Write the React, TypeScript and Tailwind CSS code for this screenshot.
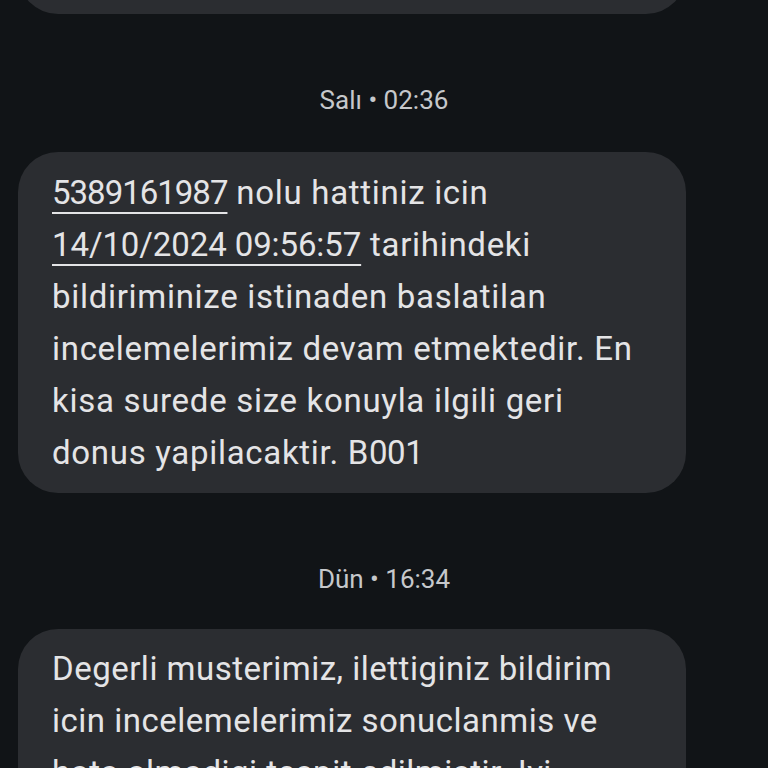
import React from "react";

const font = { fontFamily: "Roboto, 'Noto Sans', sans-serif" };

export default function App() {
  return (
    <div className="h-[768px] w-[768px] overflow-hidden bg-[#111417] text-[#e4e4e6]" style={font}>
      <div className="flex flex-col">
        <div className="ml-[18px] mr-[82px] -mt-[66px] h-[80px] rounded-[40px] bg-[#2b2d31]" />
        <div className="mt-[72px] flex h-[28px] items-center justify-center text-[26px] text-[#c6c8cb]">
          Salı • 02:36
        </div>
        <div className="ml-[18px] mr-[82px] mt-[38px] rounded-[40px] bg-[#2b2d31] pl-[34px] pr-[20px] pt-[15px] pb-[14px] text-[33px] leading-[52px] tracking-[0.7px] whitespace-nowrap">
          <span className="underline decoration-2 underline-offset-[8px] tracking-[-1px]">5389161987</span> nolu hattiniz icin
          <br />
          <span className="underline decoration-2 underline-offset-[8px] tracking-[-0.1px]">14/10/2024 09:56:57</span> tarihindeki
          <br />
          bildiriminize istinaden baslatilan
          <br />
          incelemelerimiz devam etmektedir. En
          <br />
          kisa surede size konuyla ilgili geri
          <br />
          donus yapilacaktir. B<span className="tracking-[-0.5px]">001</span>
        </div>
        <div className="mt-[72px] flex h-[28px] items-center justify-center text-[26px] text-[#c6c8cb]">
          Dün • 16:34
        </div>
        <div className="ml-[18px] mr-[82px] mt-[36px] rounded-[40px] bg-[#2b2d31] pl-[34px] pr-[20px] pt-[14px] pb-[16px] text-[33px] leading-[52px] tracking-[0.5px] whitespace-nowrap">
          Degerli musterimiz, ilettiginiz bildirim
          <br />
          icin incelemelerimiz sonuclanmis ve
          <br />
          hata almadigi tespit edilmistir. Iyi
          <br />
          gunler dileriz.
        </div>
      </div>
    </div>
  );
}
